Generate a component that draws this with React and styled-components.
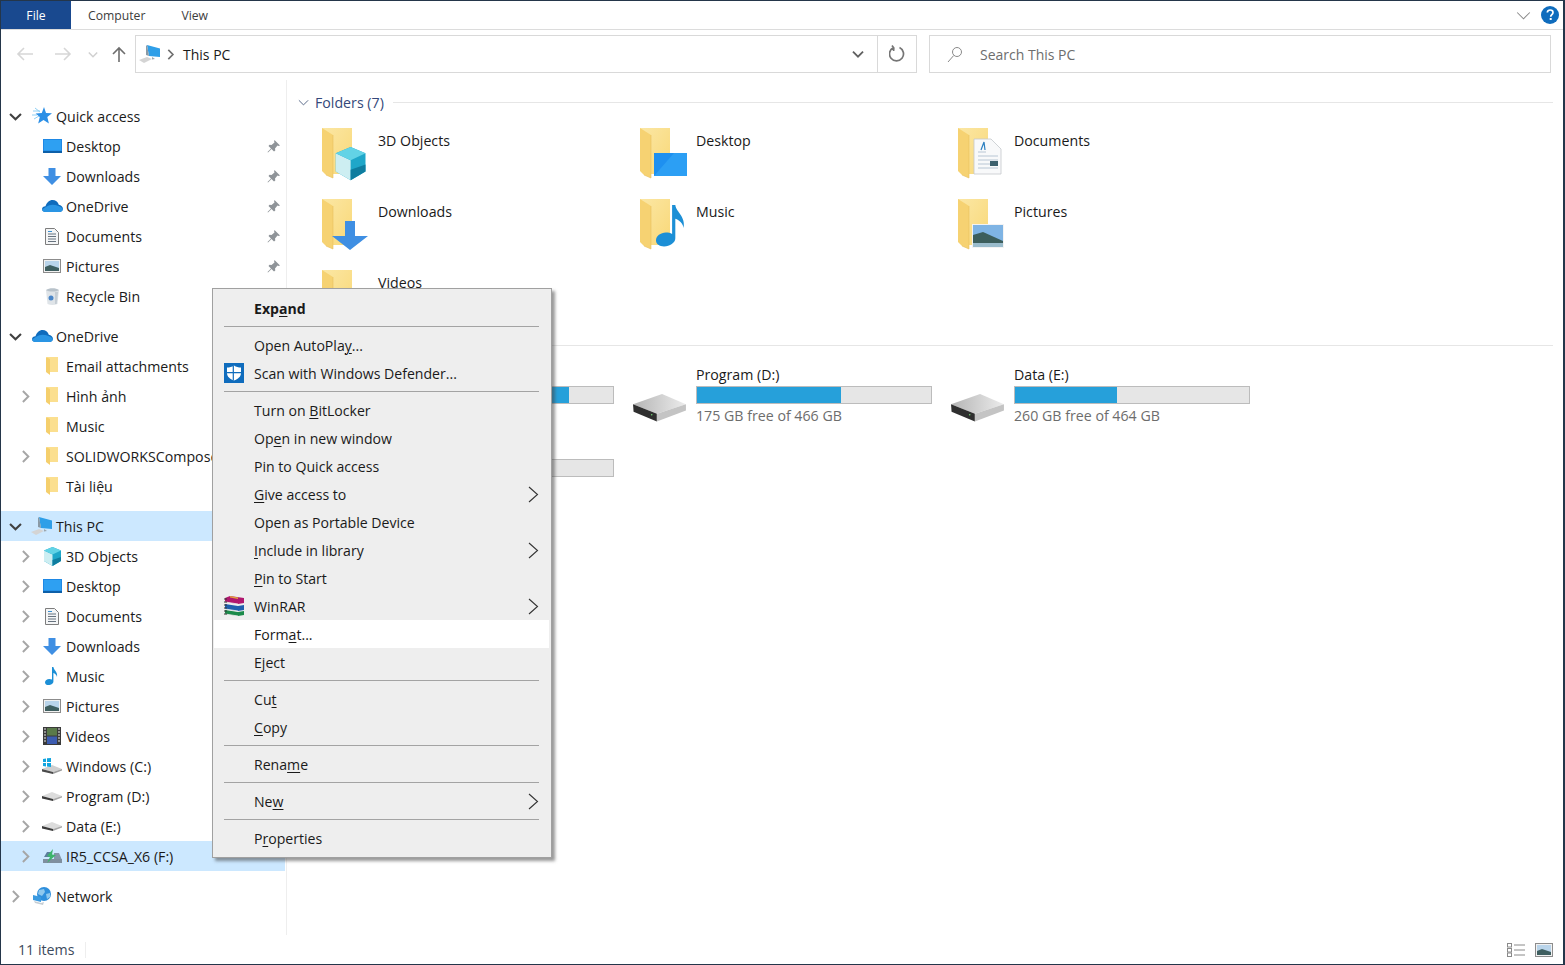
import { Fragment } from "react";
import styled, { createGlobalStyle } from "styled-components";

const GlobalStyle = createGlobalStyle`
  html, body { margin: 0; padding: 0; background: #fff; }
  body { font-family: "Open Sans", "Noto Sans", "Liberation Sans", sans-serif; color: #1a1a1a; }
  * { box-sizing: border-box; }
`;

const Window = styled.div`
  position: relative;
  width: 1565px;
  height: 965px;
  border: 1px solid #24364a;
  border-right-width: 2px;
  display: flex;
  flex-direction: column;
  overflow: hidden;
  background: #fff;
  font-size: 14.2px;
`;

const Ribbon = styled.div`
  height: 29px;
  flex: none;
  display: flex;
  align-items: stretch;
  border-bottom: 1px solid #dcdcdc;
  font-size: 12.2px;
`;

const FileTab = styled.div`
  width: 70px;
  background: #19498f;
  color: #fff;
  display: flex;
  align-items: center;
  justify-content: center;
`;

const RibbonTab = styled.div`
  display: flex;
  align-items: center;
  color: #3d3d3d;
  margin-left: ${(p) => p.$gap}px;
`;

const RibbonRight = styled.div`
  margin-left: auto;
  display: flex;
  align-items: center;
  gap: 10px;
  padding-right: 4px;
`;

const AddressRow = styled.div`
  height: 50px;
  flex: none;
  display: flex;
  align-items: flex-start;
  padding-top: 5px;
`;

const NavButtons = styled.div`
  width: 134px;
  height: 38px;
  flex: none;
  display: flex;
  align-items: center;
  padding-left: 14px;
`;

const NavButton = styled.span`
  display: flex;
  flex: none;
  justify-content: center;
  width: ${(p) => p.$w}px;
  margin-left: ${(p) => p.$ml || 0}px;
`;

const AddressBox = styled.div`
  width: 782px;
  height: 38px;
  border: 1px solid #d9d9d9;
  display: flex;
  align-items: center;
  padding-left: 3px;
  font-size: 14px;
`;

const Crumb = styled.span`
  display: flex;
  margin-left: ${(p) => p.$ml}px;
`;

const AddressArrow = styled.span`
  margin-left: auto;
  width: 39px;
  display: flex;
  justify-content: center;
`;

const RefreshCell = styled.span`
  width: 39px;
  height: 36px;
  border-left: 1px solid #d9d9d9;
  display: flex;
  align-items: center;
  justify-content: center;
`;

const SearchBox = styled.div`
  width: 622px;
  height: 38px;
  margin-left: 12px;
  border: 1px solid #d9d9d9;
  display: flex;
  align-items: center;
  padding-left: 17px;
  gap: 17px;
  color: #6d6d6d;
  font-size: 14px;
`;

const Body = styled.div`
  flex: 1;
  display: flex;
  min-height: 0;
`;

const Nav = styled.nav`
  width: 286px;
  flex: none;
  border-right: 1px solid #eeeeee;
  padding: 21px 1px 0 0;
  display: flex;
  flex-direction: column;
  gap: 10px;
`;

const NavGroup = styled.div`
  display: flex;
  flex-direction: column;
`;

const NavRow = styled.div`
  height: 30px;
  display: flex;
  align-items: center;
  padding-left: ${(p) => 7 + p.$level * 10}px;
  background: ${(p) => (p.$selected ? "#cce8ff" : "transparent")};
  white-space: nowrap;
  overflow: hidden;
`;

const Twist = styled.span`
  width: 14px;
  flex: none;
  display: flex;
  justify-content: center;
`;

const NavIcon = styled.span`
  width: 24px;
  margin-left: 8px;
  flex: none;
  display: flex;
  justify-content: center;
`;

const NavLabel = styled.span`
  margin-left: 2px;
`;

const Pin = styled.span`
  margin-left: auto;
  padding-right: 5px;
  display: flex;
`;

const Content = styled.main`
  flex: 1;
  padding: 14px 10px 0 8px;
  min-width: 0;
`;

const GroupHeader = styled.div`
  display: flex;
  align-items: center;
  height: 16px;
  color: #34487a;
  font-size: 14.2px;
  margin-top: ${(p) => p.$top || 0}px;
  white-space: nowrap;
`;

const HeaderChevron = styled.span`
  width: 16px;
  margin-right: 4px;
  display: flex;
  justify-content: center;
`;

const HeaderLine = styled.span`
  flex: 1;
  height: 1px;
  margin-left: 9px;
  background: #e6e6e6;
`;

const TileGrid = styled.div`
  display: grid;
  grid-template-columns: repeat(3, 318px);
  margin-left: 23px;
  padding-top: ${(p) => p.$top}px;
`;

const FolderTile = styled.div`
  height: 71px;
  display: flex;
  align-items: flex-start;
`;

const TileIcon = styled.div`
  width: 60px;
  flex: none;
  padding-left: ${(p) => p.$left}px;
  display: flex;
`;

const FolderName = styled.div`
  padding-top: 5px;
  font-size: 14.2px;
`;

const DriveTile = styled.div`
  height: 73px;
  display: flex;
  align-items: flex-start;
  font-size: 14.2px;
`;

const DriveIcon = styled.div`
  width: 60px;
  flex: none;
  margin-left: -3px;
  margin-right: 3px;
  padding-top: 29px;
  display: flex;
`;

const DriveInfo = styled.div`
  display: flex;
  flex-direction: column;
`;

const DriveName = styled.div`
  height: 21px;
  line-height: 20px;
`;

const Bar = styled.div`
  width: 236px;
  height: 18px;
  background: #e6e6e6;
  border: 1px solid #bcbcbc;
`;

const BarFill = styled.div`
  height: 100%;
  background: #26a0da;
`;

const DriveFree = styled.div`
  height: 20px;
  margin-top: 2px;
  color: #6d6d6d;
`;

const StatusBar = styled.div`
  height: 29px;
  flex: none;
  display: flex;
  align-items: center;
  padding: 0 10px 0 17px;
  color: #3d4a5c;
`;

const StatusDivider = styled.span`
  width: 1px;
  height: 16px;
  margin-left: 11px;
  background: #eeeeee;
`;

const ViewIcons = styled.div`
  margin-left: auto;
  display: flex;
  align-items: center;
  gap: 10px;
`;

const Menu = styled.div`
  position: absolute;
  left: 211px;
  top: 287px;
  width: 340px;
  height: 570px;
  padding: 5px 2px 5px 1px;
  background: #eeeeee;
  border: 1px solid #a0a0a0;
  box-shadow: 3px 3px 3px rgba(70, 70, 70, 0.55);
  font-size: 14.1px;
`;

const MenuRow = styled.div`
  height: 28px;
  display: flex;
  align-items: center;
  position: relative;
  padding-left: 40px;
  background: ${(p) => (p.$active ? "#ffffff" : "transparent")};
  font-weight: ${(p) => (p.$bold ? 700 : 400)};
  u { text-underline-offset: 2px; text-decoration-thickness: 1px; }
`;

const MenuIcon = styled.span`
  position: absolute;
  left: 10px;
  display: flex;
`;

const MenuArrow = styled.span`
  position: absolute;
  right: 10px;
  display: flex;
`;

const MenuSeparator = styled.div`
  height: 9px;
  padding: 4px 10px 0;
  &::before {
    content: "";
    display: block;
    height: 1px;
    background: #a3a3a3;
  }
`;

// --- drawn icons ---

const Chevron = ({ dir = "right", color = "#a6a6a6", size = 13, sw = 1.5 }) => {
  const d = dir === "right" ? "M3 .8l4.200 4.200-4.200 4.200" : "M.8 3l4.200 4.200 4.200-4.200";
  return (
    <svg width={size} height={size} viewBox="0 0 10 10" fill="none">
      <path d={d} stroke={color} strokeWidth={sw} />
    </svg>
  );
};

const Arrow = ({ dir, color }) => (
  <svg width="18" height="16" viewBox="0 0 18 16" fill="none" stroke={color} strokeWidth="1.6">
    {dir === "left" && <path d="M17 8H2M8 2L2 8l6 6" />}
    {dir === "right" && <path d="M1 8h15M10 2l6 6-6 6" />}
    {dir === "up" && <path d="M9 16V2M3 8l6-6 6 6" />}
  </svg>
);

const Star = () => (
  <svg width="20" height="18" viewBox="0 0 20 18">
    <path d="M1 4h7M0 8h5M3 1l5 4M2 12l5-3" stroke="#8fd0f5" strokeWidth="1" />
    <path d="M12 0l2 6 6 .3-4.700 3.800 1.600 6.400L11.500 13l-5.300 3.500 1.600-6.400L3.600 6.600 9.800 6z" fill="#2b8fe6" />
  </svg>
);

const Monitor = () => (
  <svg width="19" height="14" viewBox="0 0 19 14">
    <rect width="19" height="14" fill="#1e88e5" />
    <rect x="1" y="1" width="17" height="10.5" fill="#2ea0f2" />
    <rect y="12" width="19" height="2" fill="#0d5fa8" />
  </svg>
);

const DownArrow = () => (
  <svg width="18" height="17" viewBox="0 0 18 17">
    <path d="M5.500 0h7v8H18l-9 9-9-9h5.500z" fill="#3f8fe3" />
  </svg>
);

const Cloud = () => (
  <svg width="21" height="12" viewBox="0 0 21 12">
    <path d="M3.500 12C1.500 12 0 10.800 0 9.200 0 7.500 1.500 6.300 3.500 6.300 4.500 2.500 7.500 0 10.500 0c3 0 5.500 1.800 6.300 4.700 2.300.3 4.200 2.400 4.200 4 0 1.800-1.500 3.300-3.500 3.300z" fill="#0f6cbd" />
    <path d="M3.500 12C1.500 12 0 10.800 0 9.200c3-1.200 6-4.500 10.500-4.500 4 0 7 1 10.500 4 0 1.800-1.500 3.300-3.500 3.300z" fill="#2a95e4" />
  </svg>
);

const Doc = () => (
  <svg width="14" height="17" viewBox="0 0 14 17">
    <path d="M.5.5h9l4 4v12H.5z" fill="#f4f5f6" stroke="#7d7d7d" />
    <path d="M3 3.500h4" stroke="#3a8fd0" />
    <path d="M3 6h8M3 8.500h8M3 11h8M3 13.500h8" stroke="#66727e" />
  </svg>
);

const Picture = () => (
  <svg width="18" height="14" viewBox="0 0 18 14">
    <rect x=".5" y=".5" width="17" height="13" fill="#f1f1f1" stroke="#8c8c8c" />
    <rect x="2" y="2" width="14" height="10" fill="#b9d4ea" />
    <path d="M2 8l5-2 9 3v3H2z" fill="#3f5f60" />
  </svg>
);

const Bin = () => (
  <svg width="15" height="17" viewBox="0 0 15 17">
    <path d="M1 2h13l-1.500 14c-3 1.300-7 1.300-10 0z" fill="#dfe4e8" />
    <path d="M1 2c3-2.300 10-2.300 13 0-3 2-10 2-13 0z" fill="#b8c2ca" />
    <path d="M10 4h3l-1.300 12H10z" fill="#c5cdd4" />
    <circle cx="6" cy="10" r="2.500" fill="#4a86c8" />
  </svg>
);

const SmallFolder = () => (
  <svg width="13" height="18" viewBox="0 0 13 18">
    <path d="M1 0h11v15H1z" fill="#fbdf8f" />
    <path d="M0 0l4 2v16l-4-3z" fill="#f5cf6c" />
  </svg>
);

const PcIcon = () => (
  <svg width="22" height="18" viewBox="0 0 22 18">
    <path d="M0 15l8-3 5 2-8 4z" fill="#d4d4d4" />
    <path d="M8 0l13 3.500V12L10 11z" fill="#2f9fe8" />
    <path d="M8 0l-1 1v9l3 1z" fill="#8a9aa6" />
    <path d="M13 12l3 2-3 .5z" fill="#9aa5ad" />
  </svg>
);

const Cube = ({ size = 19 }) => (
  <svg width={size} height={size} viewBox="0 0 19 19">
    <path d="M9.500 0L18 3.500V14l-8.500 5L1 14V3.500z" fill="#1fa7c9" />
    <path d="M1 3.500l8.500 4v11.500L1 14z" fill="#cdeef2" />
    <path d="M9.500 0L18 3.500l-8.500 4L1 3.500z" fill="#62d3e6" />
    <path d="M9.500 13L18 10v4l-8.500 5z" fill="#0e7d9f" />
  </svg>
);

const Note = ({ w = 14, h = 18 }) => (
  <svg width={w} height={h} viewBox="0 0 14 18">
    <path d="M7 0h1.400c.3 3 4.600 5 3.600 10-.3-2-2-3.500-3.600-4v8.500C8.400 16.500 6 18 3.500 18 1.500 18 0 17 0 15.400 0 13.600 2 12 4.300 12c1 0 2 .2 2.700.6z" fill="#1c8fd6" />
  </svg>
);

const Film = () => (
  <svg width="18" height="18" viewBox="0 0 18 18">
    <rect width="18" height="18" fill="#3a3a3a" />
    <rect x="4" y="1" width="10" height="7.500" fill="#5a7a4a" />
    <rect x="4" y="9.500" width="10" height="7.500" fill="#3c5cb0" />
    <path d="M1 2h2M1 5h2M1 8h2M1 11h2M1 14h2M15 2h2M15 5h2M15 8h2M15 11h2M15 14h2" stroke="#e5e5e5" strokeWidth="1.200" />
  </svg>
);

const SmallDrive = () => (
  <svg width="20" height="9" viewBox="0 0 20 9">
    <path d="M10 0l10 4-9 3-11-3z" fill="#dcdcdc" />
    <path d="M0 4l11 3v2L0 6.500z" fill="#3a3a3a" />
    <path d="M11 7l9-3v1.500L11 9z" fill="#a8a8a8" />
  </svg>
);

const WinDrive = () => (
  <svg width="20" height="16" viewBox="0 0 20 16">
    <path d="M10 7l10 4-9 3-11-3z" fill="#cfcfcf" />
    <path d="M0 11l11 3v2L0 13.500z" fill="#4a4a4a" />
    <path d="M11 14l9-3v1.500L11 16z" fill="#9c9c9c" />
    <path d="M1 1l3-.5V4H1zM5 .3L9 0v4H5zM1 5h3v3.500L1 8zM5 5h4v4L5 8.500z" fill="#12a5df" />
  </svg>
);

const UsbDrive = () => (
  <svg width="19" height="14" viewBox="0 0 19 14">
    <path d="M1 8l3-5h4l-1 5z" fill="#5c7f9c" />
    <path d="M11 4h5l3 7H11z" fill="#8496a8" />
    <path d="M0 10h19v4H0z" fill="#7f8f9f" />
    <path d="M10 0L4 7l3 1-3 6 9-8-4-.5z" fill="#3db56c" />
  </svg>
);

const Network = () => (
  <svg width="19" height="18" viewBox="0 0 19 18">
    <circle cx="11" cy="7" r="7" fill="#2f8fdc" />
    <path d="M6 3l5-1 1 3-3 4-4-2zM13 7l4-1 0 4-3 2z" fill="#8fc8ee" />
    <path d="M0 8l8 2v5l-8-2z" fill="#3a9ae0" />
    <path d="M1 14l7 2 3-1-1 3-8-2z" fill="#c4cdd4" />
  </svg>
);

const PinIcon = () => (
  <svg width="13" height="13" viewBox="0 0 13 13">
    <path d="M7.500 0L13 5.500l-1.300.5-1.200-.4L8 8.500l.3 2L7 11.500 4.500 9 1 12.500 .5 12 4 8.500 1.500 6 2.500 4.700l2 .3 3-2.500-.4-1.200z" fill="#8f9499" />
  </svg>
);

const DriveBig = () => (
  <svg width="54" height="28" viewBox="0 0 52 27">
    <defs>
      <linearGradient id="driveTop" x1="0" y1="0" x2="1" y2="0">
        <stop offset="0" stopColor="#b4b4b4" />
        <stop offset="1" stopColor="#ececec" />
      </linearGradient>
    </defs>
    <path d="M28 0l23 10-28 9L0 10z" fill="url(#driveTop)" />
    <path d="M0 10l23 9v7.500L.500 17z" fill="#2f2f2f" />
    <path d="M23 19l28-9v6L23 26.500z" fill="#c4c4c4" />
    <circle cx="18" cy="20" r=".8" fill="#6fd06f" />
  </svg>
);

const BigFolder = ({ children }) => (
  <svg width="48" height="56" viewBox="0 0 48 56">
    <defs>
      <linearGradient id="folderBack" x1="0" y1="0" x2="1" y2="1">
        <stop offset="0" stopColor="#fbe7a5" />
        <stop offset="1" stopColor="#f9d877" />
      </linearGradient>
    </defs>
    <path d="M1 2h30v46H8z" fill="url(#folderBack)" />
    <path d="M1 2l11 7v43l-7-3-4-4z" fill="#f6d272" />
    <path d="M12 9v43l-7-3" fill="none" stroke="#e9bf5d" strokeWidth=".6" />
    {children}
  </svg>
);

const FolderOverlay = {
  cube: (
    <g transform="translate(13 21) scale(1.750)">
      <path d="M9.500 0L18 3.500V14l-8.500 5L1 14V3.500z" fill="#1fa7c9" />
      <path d="M1 3.500l8.500 4v11.500L1 14z" fill="#cdeef2" />
      <path d="M9.500 0L18 3.500l-8.500 4L1 3.500z" fill="#62d3e6" />
      <path d="M9.500 13L18 10v4l-8.500 5z" fill="#0e7d9f" />
    </g>
  ),
  desktop: (
    <g>
      <rect x="15" y="27" width="33" height="23" fill="#1e90f0" />
      <path d="M15 50l20-23h13v23z" fill="#2c9ff4" />
    </g>
  ),
  download: <path d="M24 24h10v15h13L29 53 11 39h13z" fill="#3f8fe3" />,
  documents: (
    <g>
      <path d="M17 13h17l10 10v25H17z" fill="#f8f9fa" stroke="#c4c8cc" strokeWidth=".8" />
      <path d="M21 26h8M21 30h20M21 34h20M21 38h12M21 42h20" stroke="#b8c6d4" />
      <path d="M24 24l3-8 1 8" fill="none" stroke="#2b7fc0" strokeWidth="1.200" />
      <rect x="33" y="35" width="8" height="5" fill="#3b5f6c" />
    </g>
  ),
  music: (
    <g transform="translate(17 8) scale(2.300)">
      <path d="M7 0h1.400c.3 3 4.600 5 3.600 10-.3-2-2-3.500-3.600-4v8.500C8.400 16.500 6 18 3.500 18 1.500 18 0 17 0 15.400 0 13.600 2 12 4.300 12c1 0 2 .2 2.700.6z" fill="#1c8fd6" />
    </g>
  ),
  pictures: (
    <g>
      <rect x="15" y="27" width="32" height="24" fill="#f3f3f3" />
      <rect x="16" y="28" width="30" height="22" fill="#7fb4e4" />
      <path d="M16 38l10-3 20 9v6H16z" fill="#3c5e5c" />
      <path d="M16 46h30v4H16z" fill="#9abccc" />
    </g>
  ),
  videos: (
    <g>
      <rect x="14" y="27" width="30" height="24" fill="#3c5cb0" />
      <path d="M14 27h30v3H14z" fill="#555" />
    </g>
  ),
};

const Shield = () => (
  <svg width="20" height="20" viewBox="0 0 20 20">
    <rect width="20" height="20" fill="#0f6cbd" />
    <path d="M10 2.500c2.200 1.500 4.500 2 7 2v5.500c0 3.800-3 6-7 7.500-4-1.500-7-3.700-7-7.500V4.500c2.500 0 4.800-.5 7-2z" fill="#fff" />
    <path d="M9.300 2.500v15M3 9.700h14" stroke="#0f6cbd" strokeWidth="1.200" />
  </svg>
);

const WinRar = () => (
  <svg width="20" height="20" viewBox="0 0 20 20">
    <path d="M1 2l5-2 14 2v5l-6 1L1 6z" fill="#b0176e" />
    <path d="M1 8l13 2 6-1v5l-6 1L1 13z" fill="#1f5fae" />
    <path d="M1 14l13 2 6-1v4l-6 1-13-2z" fill="#1b8a4a" />
    <path d="M1 6l13 2M1 13l13 2M1 18l13 2" stroke="#e8e8e8" strokeWidth=".8" />
    <path d="M6 0l8 1.500V3L6 1.500z" fill="#e2a33a" />
    <path d="M0 3h3M0 6h3M0 9h3M0 12h3M0 15h3M0 18h3" stroke="#333" />
  </svg>
);

const Submenu = () => (
  <svg width="11" height="17" viewBox="0 0 11 17" fill="none">
    <path d="M1 1l8.500 7.500L1 16" stroke="#333" strokeWidth="1.100" />
  </svg>
);

const Refresh = () => (
  <svg width="16" height="18" viewBox="0 0 16 18" fill="none">
    <path d="M4.500 2.500a7 7 0 106 0M3 .5l1.800 2.500-.2 3" stroke="#757575" strokeWidth="1.700" />
  </svg>
);

const SearchGlass = () => (
  <svg width="16" height="17" viewBox="0 0 16 17" fill="none" stroke="#8a8a8a" strokeWidth="1">
    <circle cx="10" cy="6" r="4.500" />
    <path d="M6.700 9.500L1 16" />
  </svg>
);

const Help = () => (
  <svg width="18" height="18" viewBox="0 0 18 18">
    <circle cx="9" cy="9" r="9" fill="#0f6cbd" />
    <path d="M6.300 6.500C6.500 4.800 7.700 4 9.200 4c1.700 0 2.800 1 2.800 2.400 0 2.100-2.300 2.300-2.300 4.300" fill="none" stroke="#fff" strokeWidth="1.700" />
    <rect x="8.700" y="12" width="2" height="2" fill="#fff" />
  </svg>
);

const DetailsView = () => (
  <svg width="18" height="14" viewBox="0 0 18 14" fill="none">
    <rect x=".5" y=".5" width="4" height="3.500" stroke="#8a8a8a" />
    <rect x=".5" y="5.500" width="4" height="3.500" stroke="#8a8a8a" />
    <rect x=".5" y="10" width="4" height="3.500" stroke="#8a8a8a" />
    <path d="M7 2h11M7 7h11M7 12h11" stroke="#8a8a8a" />
  </svg>
);

// --- data ---

const quickAccess = [
  { name: "Desktop", icon: <Monitor />, pin: true },
  { name: "Downloads", icon: <DownArrow />, pin: true },
  { name: "OneDrive", icon: <Cloud />, pin: true },
  { name: "Documents", icon: <Doc />, pin: true },
  { name: "Pictures", icon: <Picture />, pin: true },
  { name: "Recycle Bin", icon: <Bin /> },
];

const oneDrive = [
  { name: "Email attachments", icon: <SmallFolder /> },
  { name: "Hình ảnh", icon: <SmallFolder />, more: true },
  { name: "Music", icon: <SmallFolder /> },
  { name: "SOLIDWORKSComposer", icon: <SmallFolder />, more: true },
  { name: "Tài liệu", icon: <SmallFolder /> },
];

const thisPc = [
  { name: "3D Objects", icon: <Cube />, more: true },
  { name: "Desktop", icon: <Monitor />, more: true },
  { name: "Documents", icon: <Doc />, more: true },
  { name: "Downloads", icon: <DownArrow />, more: true },
  { name: "Music", icon: <Note />, more: true },
  { name: "Pictures", icon: <Picture />, more: true },
  { name: "Videos", icon: <Film />, more: true },
  { name: "Windows (C:)", icon: <WinDrive />, more: true },
  { name: "Program (D:)", icon: <SmallDrive />, more: true },
  { name: "Data (E:)", icon: <SmallDrive />, more: true },
  { name: "IR5_CCSA_X6 (F:)", icon: <UsbDrive />, more: true, selected: true },
];

const folders = [
  { name: "3D Objects", overlay: "cube" },
  { name: "Desktop", overlay: "desktop" },
  { name: "Documents", overlay: "documents" },
  { name: "Downloads", overlay: "download" },
  { name: "Music", overlay: "music" },
  { name: "Pictures", overlay: "pictures" },
  { name: "Videos", overlay: "videos" },
];

// the first column's labels sit behind the context menu, only the bars show
const drives = [
  { id: "c", used: 81 },
  { id: "d", name: "Program (D:)", free: "175 GB free of 466 GB", used: 61.5 },
  { id: "e", name: "Data (E:)", free: "260 GB free of 464 GB", used: 43.5 },
  { id: "f", used: 0 },
];

// "_" marks the letter that gets the underline
const menuGroups = [
  [{ label: "Exp_and", bold: true }],
  [{ label: "Open AutoPla_y..." }, { label: "Scan with Windows Defender...", icon: <Shield /> }],
  [
    { label: "Turn on _BitLocker" },
    { label: "Op_en in new window" },
    { label: "Pin to Quick access" },
    { label: "_Give access to", sub: true },
    { label: "Open as Portable Device" },
    { label: "_Include in library", sub: true },
    { label: "_Pin to Start" },
    { label: "WinRAR", icon: <WinRar />, sub: true },
    { label: "Form_at...", active: true },
    { label: "E_ject" },
  ],
  [{ label: "Cu_t" }, { label: "_Copy" }],
  [{ label: "Rena_me" }],
  [{ label: "Ne_w", sub: true }],
  [{ label: "P_roperties" }],
];

const Mnemonic = ({ label }) => {
  const at = label.indexOf("_");
  if (at < 0) return label;
  return (
    <span>
      {label.slice(0, at)}
      <u>{label[at + 1]}</u>
      {label.slice(at + 2)}
    </span>
  );
};

const TreeRow = ({ item, level }) => (
  <NavRow $level={level} $selected={item.selected}>
    <Twist>{item.more && <Chevron />}</Twist>
    <NavIcon>{item.icon}</NavIcon>
    <NavLabel>{item.name}</NavLabel>
    {item.pin && (
      <Pin>
        <PinIcon />
      </Pin>
    )}
  </NavRow>
);

const RootRow = ({ name, icon, open, selected }) => (
  <NavRow $level={0} $selected={selected}>
    <Twist>{open ? <Chevron dir="down" color="#404040" sw={1.6} /> : <Chevron />}</Twist>
    <NavIcon>{icon}</NavIcon>
    <NavLabel>{name}</NavLabel>
  </NavRow>
);

function App() {
  return (
    <Window>
      <GlobalStyle />
      <Ribbon>
        <FileTab>File</FileTab>
        <RibbonTab $gap={17}>Computer</RibbonTab>
        <RibbonTab $gap={36}>View</RibbonTab>
        <RibbonRight>
          <Chevron dir="down" size={15} sw={0.7} color="#8a8a8a" />
          <Help />
        </RibbonRight>
      </Ribbon>

      <AddressRow>
        <NavButtons>
          <NavButton $w={20}>
            <Arrow dir="left" color="#d6d6d6" />
          </NavButton>
          <NavButton $w={20} $ml={18}>
            <Arrow dir="right" color="#d6d6d6" />
          </NavButton>
          <NavButton $w={10} $ml={15}>
            <Chevron dir="down" color="#d0d0d0" size={11} />
          </NavButton>
          <NavButton $w={20} $ml={11}>
            <Arrow dir="up" color="#6e6e6e" />
          </NavButton>
        </NavButtons>
        <AddressBox>
          <PcIcon />
          <Crumb $ml={4}>
            <Chevron color="#707070" size={11} />
          </Crumb>
          <Crumb $ml={7}>This PC</Crumb>
          <AddressArrow>
            <Chevron dir="down" color="#606060" size={12} />
          </AddressArrow>
          <RefreshCell>
            <Refresh />
          </RefreshCell>
        </AddressBox>
        <SearchBox>
          <SearchGlass />
          Search This PC
        </SearchBox>
      </AddressRow>

      <Body>
        <Nav>
          <NavGroup>
            <RootRow name="Quick access" icon={<Star />} open />
            {quickAccess.map((item) => (
              <TreeRow key={item.name} item={item} level={1} />
            ))}
          </NavGroup>
          <NavGroup>
            <RootRow name="OneDrive" icon={<Cloud />} open />
            {oneDrive.map((item) => (
              <TreeRow key={item.name} item={item} level={1} />
            ))}
          </NavGroup>
          <NavGroup>
            <RootRow name="This PC" icon={<PcIcon />} open selected />
            {thisPc.map((item) => (
              <TreeRow key={item.name} item={item} level={1} />
            ))}
          </NavGroup>
          <NavGroup>
            <RootRow name="Network" icon={<Network />} />
          </NavGroup>
        </Nav>

        <Content>
          <GroupHeader>
            <HeaderChevron>
              <Chevron dir="down" sw={0.9} size={11} color="#5a6a8a" />
            </HeaderChevron>
            Folders (7)
            <HeaderLine />
          </GroupHeader>
          <TileGrid $top={16}>
            {folders.map((f) => (
              <FolderTile key={f.name}>
                <TileIcon $left={3}>
                  <BigFolder>{FolderOverlay[f.overlay]}</BigFolder>
                </TileIcon>
                <FolderName>{f.name}</FolderName>
              </FolderTile>
            ))}
          </TileGrid>
          <GroupHeader $top={-2}>
            <HeaderLine />
          </GroupHeader>
          <TileGrid $top={12}>
            {drives.map((d) => (
              <DriveTile key={d.id}>
                <DriveIcon>
                  <DriveBig />
                </DriveIcon>
                <DriveInfo>
                  <DriveName>{d.name}</DriveName>
                  <Bar>
                    <BarFill style={{ width: `${d.used}%` }} />
                  </Bar>
                  <DriveFree>{d.free}</DriveFree>
                </DriveInfo>
              </DriveTile>
            ))}
          </TileGrid>
        </Content>
      </Body>

      <StatusBar>
        11 items
        <StatusDivider />
        <ViewIcons>
          <DetailsView />
          <Picture />
        </ViewIcons>
      </StatusBar>

      <Menu>
        {menuGroups.map((group, i) => (
          <Fragment key={i}>
            {i > 0 && <MenuSeparator />}
            {group.map((item) => (
              <MenuRow key={item.label} $active={item.active} $bold={item.bold}>
                {item.icon && <MenuIcon>{item.icon}</MenuIcon>}
                <Mnemonic label={item.label} />
                {item.sub && (
                  <MenuArrow>
                    <Submenu />
                  </MenuArrow>
                )}
              </MenuRow>
            ))}
          </Fragment>
        ))}
      </Menu>
    </Window>
  );
}

export default App;
